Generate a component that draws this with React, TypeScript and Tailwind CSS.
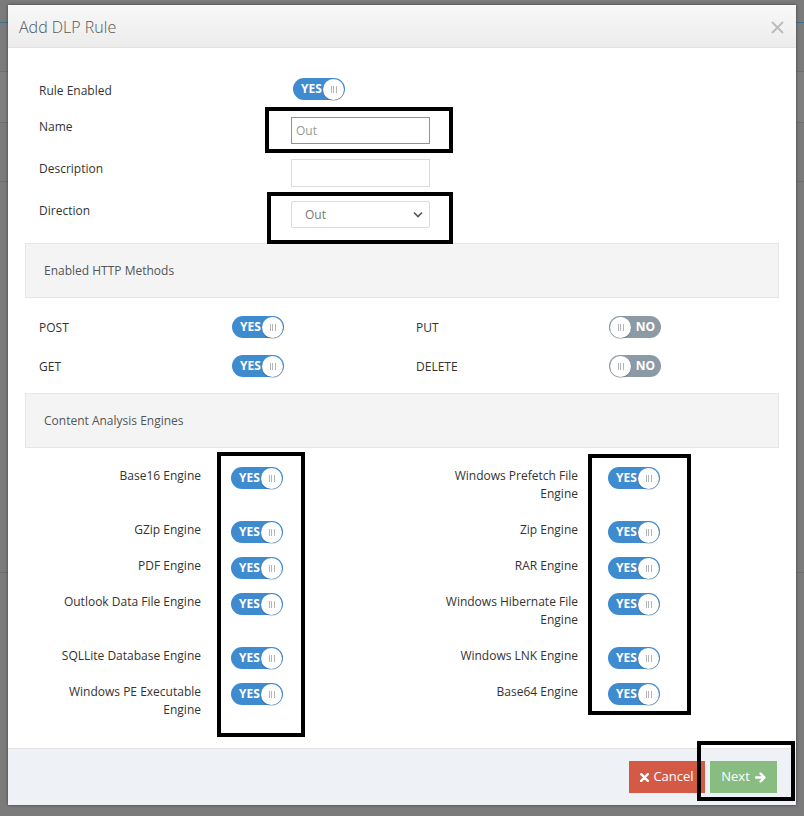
import React from "react";

const font = { fontFamily: '"Open Sans", "Liberation Sans", sans-serif' };

function Knob() {
  return (
    <span className="flex h-[21px] w-[21px] items-center justify-center gap-[1.5px] rounded-full bg-white shadow-[0_1px_1px_rgba(0,0,0,0.25)]">
      <span className="h-[7px] w-[1px] bg-[#b5b5b5]" />
      <span className="h-[7px] w-[1px] bg-[#b5b5b5]" />
      <span className="h-[7px] w-[1px] bg-[#b5b5b5]" />
    </span>
  );
}

function Toggle({ on = true }: { on?: boolean }) {
  if (on) {
    return (
      <span className="flex h-[22px] w-[52px] shrink-0 items-center rounded-full bg-[#3f8bd0] pl-[8px] pr-[1px]">
        <span className="flex-1 text-[12px] font-bold leading-none text-white">YES</span>
        <Knob />
      </span>
    );
  }
  return (
    <span className="flex h-[22px] w-[52px] shrink-0 items-center rounded-full bg-[#8c9aa5] pl-[1px] pr-[6px]">
      <Knob />
      <span className="flex-1 text-right text-[12px] font-bold leading-none text-white">NO</span>
    </span>
  );
}

function Mark({ className }: { className: string }) {
  return <div className={"pointer-events-none absolute border-[4px] border-black " + className} />;
}

const engines: [string, string][] = [
  ["Base16 Engine", "Windows Prefetch File Engine"],
  ["GZip Engine", "Zip Engine"],
  ["PDF Engine", "RAR Engine"],
  ["Outlook Data File Engine", "Windows Hibernate File Engine"],
  ["SQLLite Database Engine", "Windows LNK Engine"],
  ["Windows PE Executable Engine", "Base64 Engine"],
];

function EngineCell({ label }: { label: string }) {
  return (
    <div className="flex items-start">
      <div className="ml-[30px] w-[146px] text-right text-[12px] leading-[18px] text-[#333]">{label}</div>
      <div className="ml-[30px] h-[18px]">
        <Toggle />
      </div>
    </div>
  );
}

export default function App() {
  return (
    <div className="relative h-[816px] w-[804px] overflow-hidden bg-[#7b7b7b]" style={font}>
      {/* page behind the backdrop */}
      <div className="flex flex-col">
        <div className="h-[22px]" />
        <div className="h-[1px] bg-[#3f6f8f]" />
        <div className="h-[48px]" />
        <div className="h-[1px] bg-[#6f6f6f]" />
        <div className="h-[50px] bg-[#7f7f7f]" />
        <div className="h-[1px] bg-[#6f6f6f]" />
        <div className="h-[58px]" />
        <div className="h-[1px] bg-[#6f6f6f]" />
        <div className="h-[390px]" />
        <div className="h-[1px] bg-[#6f6f6f]" />
      </div>

      {/* modal */}
      <div className="absolute left-[8px] top-[5px] flex w-[788px] flex-col bg-white shadow-[0_0_3px_rgba(0,0,0,0.5)]">
        <div className="flex h-[43px] items-center justify-between border-b border-[#e2e2e2] bg-gradient-to-b from-[#f8f8f8] to-[#ececec] pl-[11px] pr-[12px]">
          <span className="mt-[2px] text-[16px] font-light text-[#555]">Add DLP Rule</span>
          <svg width="13" height="13" viewBox="0 0 13 13" className="mt-[2px]">
            <path d="M1 1 L12 12 M12 1 L1 12" stroke="#bdbdbd" strokeWidth="2" />
          </svg>
        </div>

        <div className="flex flex-col px-[17px] pb-[29px] pt-[30px]">
          {/* top form */}
          <div className="flex h-[22px] items-start">
            <div className="mt-[4px] w-[268px] pl-[14px] text-[12px] leading-[18px] text-[#333]">Rule Enabled</div>
            <Toggle />
          </div>
          <div className="mt-[17px] flex h-[28px] items-start">
            <div className="mt-[1px] w-[266px] pl-[14px] text-[12px] leading-[18px] text-[#333]">Name</div>
            <div className="flex h-[27px] w-[139px] items-center border border-solid border-[#5cb85c] px-[4px] text-[12px] text-[#999]">Out</div>
          </div>
          <div className="mt-[14px] flex h-[28px] items-start">
            <div className="mt-[1px] w-[266px] pl-[14px] text-[12px] leading-[18px] text-[#333]">Description</div>
            <div className="h-[28px] w-[139px] border border-[#dcdcdc]" />
          </div>
          <div className="mt-[14px] flex h-[28px] items-start">
            <div className="mt-[1px] w-[266px] pl-[14px] text-[12px] leading-[18px] text-[#333]">Direction</div>
            <div className="flex h-[27px] w-[139px] items-center justify-between rounded-[2px] border border-[#dcdcdc] pl-[13px] pr-[6px] text-[12px] text-[#777]">
              <span>Out</span>
              <svg width="10" height="7" viewBox="0 0 10 7">
                <path d="M1 1.5 L5 5.5 L9 1.5" stroke="#555" strokeWidth="1.6" fill="none" />
              </svg>
            </div>
          </div>

          {/* HTTP methods */}
          <div className="mt-[14px] flex h-[55px] items-center border border-[#e6e6e6] bg-[#f4f4f4] pl-[18px] text-[12px] text-[#555]">
            Enabled HTTP Methods
          </div>
          <div className="mt-[18px] grid grid-cols-2 gap-y-[17px]">
            {[
              ["POST", true],
              ["PUT", false],
              ["GET", true],
              ["DELETE", false],
            ].map(([label, on]) => (
              <div key={label as string} className="flex items-center">
                <div className="mt-[2px] w-[207px] pl-[14px] text-[12px] text-[#333]">{label as string}</div>
                <Toggle on={on as boolean} />
              </div>
            ))}
          </div>

          {/* engines */}
          <div className="mt-[16px] flex h-[55px] items-center border border-[#e6e6e6] bg-[#f4f4f4] pl-[18px] text-[12px] text-[#555]">
            Content Analysis Engines
          </div>
          <div className="mt-[19px] grid grid-cols-2 gap-y-[18px]">
            {engines.map(([a, b]) => (
              <React.Fragment key={a}>
                <EngineCell label={a} />
                <EngineCell label={b} />
              </React.Fragment>
            ))}
          </div>
        </div>

        {/* footer */}
        <div className="flex h-[57px] items-center justify-end gap-[5px] border-t border-[#e5e5e5] bg-[#eef1f5] pr-[19px]">
          <button className="flex h-[32px] w-[76px] items-center justify-center gap-[4px] bg-[#d55a46] text-[13px] text-white">
            <svg width="9" height="9" viewBox="0 0 9 9">
              <path d="M1.2 1.2 L7.8 7.8 M7.8 1.2 L1.2 7.8" stroke="white" strokeWidth="2.4" strokeLinecap="round" />
            </svg>
            Cancel
          </button>
          <button className="flex h-[32px] w-[67px] items-center justify-center gap-[5px] bg-[#88bc80] text-[13px] text-white">
            Next
            <svg width="11" height="11" viewBox="0 0 11 11">
              <path d="M1 5.5 H9 M5.5 1.5 L9.5 5.5 L5.5 9.5" stroke="white" strokeWidth="2.4" fill="none" strokeLinecap="round" strokeLinejoin="round" />
            </svg>
          </button>
        </div>
      </div>

      {/* annotation boxes */}
      <Mark className="left-[265px] top-[107px] h-[46px] w-[188px]" />
      <Mark className="left-[267px] top-[192px] h-[52px] w-[186px]" />
      <Mark className="left-[217px] top-[452px] h-[285px] w-[88px]" />
      <Mark className="left-[588px] top-[454px] h-[261px] w-[103px]" />
      <Mark className="left-[697px] top-[741px] h-[60px] w-[98px]" />
    </div>
  );
}
